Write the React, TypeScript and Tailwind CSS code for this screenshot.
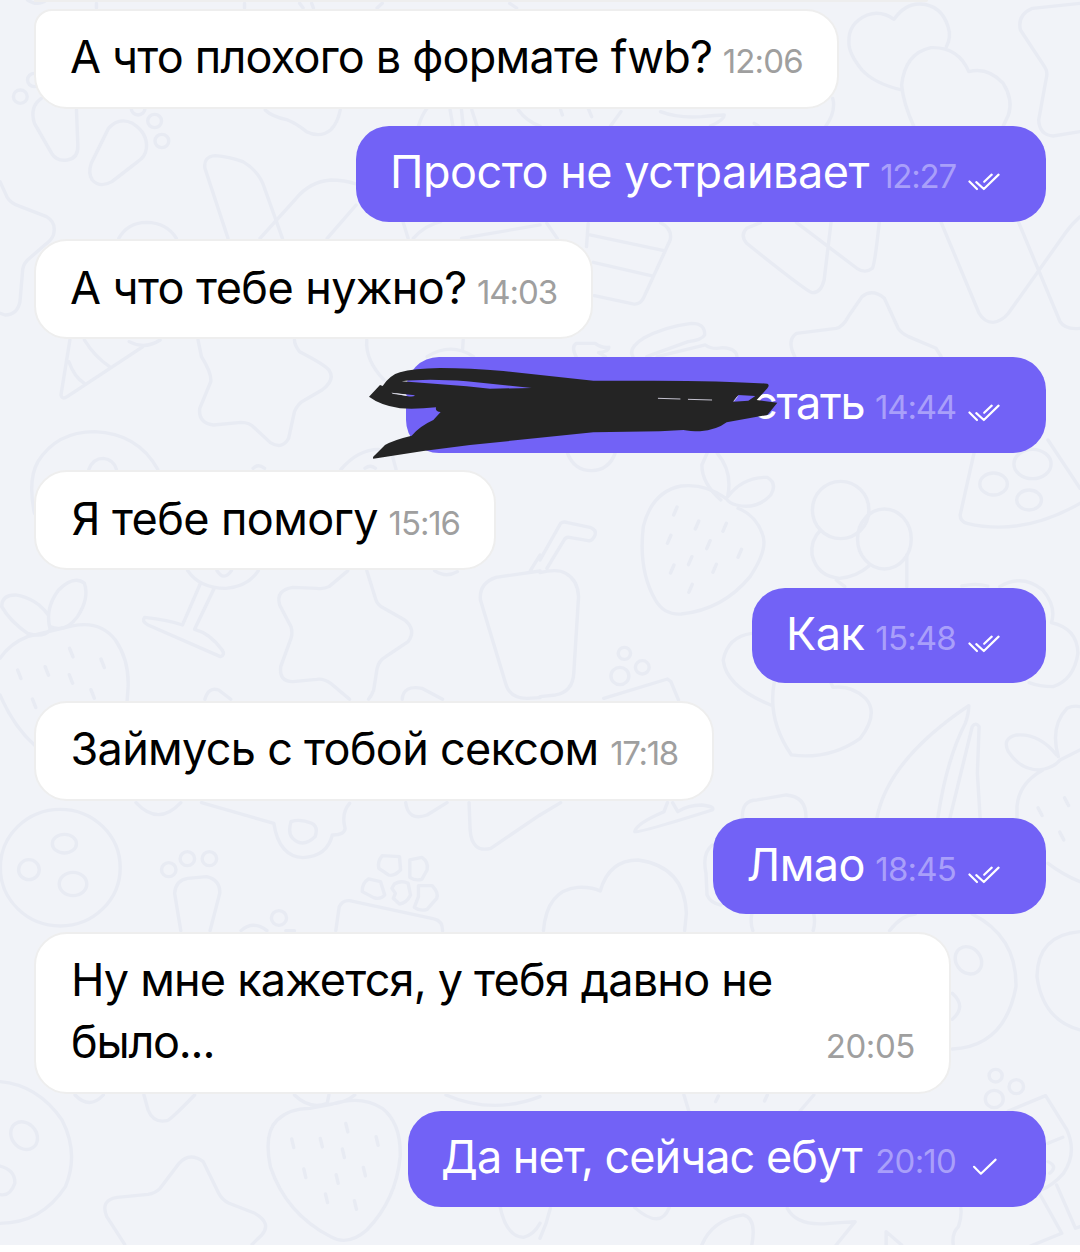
import type { ReactNode } from "react";

type Message = {
  lines: string[];
  time: string;
  mine?: boolean;
  status?: "sent" | "read";
  box: string;
  tracking: string;
  timeTracking?: string;
};

const messages: Message[] = [
  { lines: ["А что плохого в формате fwb?"], time: "12:06", box: "w-[805px] rounded-tl-[18px] pl-[34px]", tracking: "tracking-[-0.79px]" },
  { lines: ["Просто не устраивает"], time: "12:27", mine: true, status: "read", box: "w-[690px] pl-[34px]", tracking: "tracking-[-0.48px]", timeTracking: "tracking-[-1.2px]" },
  { lines: ["А что тебе нужно?"], time: "14:03", box: "w-[559px] pl-[34px]", tracking: "tracking-[-0.58px]", timeTracking: "tracking-[-1.1px]" },
  { lines: ["стать"], time: "14:44", mine: true, status: "read", box: "w-[640px] pl-[346px]", tracking: "tracking-[-1.3px]", timeTracking: "tracking-[-1.2px]" },
  { lines: ["Я тебе помогу"], time: "15:16", box: "w-[462px] pl-[35.5px]", tracking: "tracking-[-0.6px]", timeTracking: "tracking-[-1.1px]" },
  { lines: ["Как"], time: "15:48", mine: true, status: "read", box: "w-[294px] pl-[34px]", tracking: "tracking-[-0.5px]" },
  { lines: ["Займусь с тобой сексом"], time: "17:18", box: "w-[680px] pl-[34.5px]", tracking: "tracking-[-0.7px]", timeTracking: "tracking-[-1.3px]" },
  { lines: ["Лмао"], time: "18:45", mine: true, status: "read", box: "w-[333px] pl-[33.5px]", tracking: "tracking-[-0.5px]" },
  { lines: ["Ну мне кажется, у тебя давно не", "было..."], time: "20:05", box: "w-[917px] pl-[35px]", tracking: "tracking-[-0.8px]", timeTracking: "tracking-[-0.4px]" },
  { lines: ["Да нет, сейчас ебут"], time: "20:10", mine: true, status: "sent", box: "w-[638px] pl-[33px]", tracking: "tracking-[-0.98px]" },
];

function StatusIcon({ status }: { status: "sent" | "read" }) {
  return status === "read" ? (
    <svg className="ml-3 h-[19px] w-[33px] shrink-0 translate-y-[3px]" viewBox="684 160 100 58" fill="none" stroke="#fff" strokeWidth="6.5" strokeLinecap="round" strokeLinejoin="round">
      <path d="M688 189L711 212M709 191L732 212L777 168M733 190L756 168" />
    </svg>
  ) : (
    <svg className="ml-3 h-[19px] w-[33px] shrink-0 translate-y-[3px]" viewBox="144 172 100 58" fill="none" stroke="#fff" strokeWidth="6.5" strokeLinecap="round" strokeLinejoin="round">
      <path d="M162 202L183 223L228 180" />
    </svg>
  );
}

function Bubble({ m }: { m: Message }) {
  const base = "flex items-center rounded-[33px] pb-[3px]";
  const tone = m.mine
    ? "h-[95.75px] self-end bg-[#7262f6] pr-[45px] text-white"
    : "self-start border-2 border-[#eeeeee] bg-white pr-[34px] text-black";
  const height = m.mine ? "" : m.lines.length > 1 ? "h-[162px]" : "h-[100px]";
  return (
    <div className={`${base} ${tone} ${height} ${m.box}`}>
      <div className="flex w-full items-baseline-last justify-between whitespace-nowrap">
        <div className={`text-[45px] leading-[62px] ${m.tracking}`}>
          {m.lines.map((l, i) => (
            <div key={l} className={i > 0 ? "tracking-[-1.2px]" : ""}>{l}</div>
          ))}
        </div>
        <div className={`flex items-baseline text-[33px] ${m.mine ? "text-[#a99ffa]" : "text-[#9f9f9f]"}`}>
          <span className={m.timeTracking ?? "tracking-[-0.8px]"}>{m.time}</span>
          {m.status && <StatusIcon status={m.status} />}
        </div>
      </div>
    </div>
  );
}

function Piece({ x, y, children }: { x: number; y: number; children: ReactNode }) {
  return <g transform={`translate(${x} ${y}) scale(.3444 .3333)`}>{children}</g>;
}

function Rings({ items }: { items: number[][] }) {
  return (
    <>
      {items.map(([x, y, rx, ry, a]) => (
        <ellipse key={`${x}-${y}`} cx={x} cy={y} rx={rx} ry={ry ?? rx} transform={a ? `rotate(${a} ${x} ${y})` : undefined} />
      ))}
    </>
  );
}

function Seeds({ at, dx, dy }: { at: number[][]; dx: number; dy: number }) {
  return <path d={at.map(([x, y]) => `M${x - dx} ${y - dy}L${x + dx} ${y + dy}`).join("")} />;
}

/* Sweets-and-fruit line art behind the conversation */
function Wallpaper() {
  return (
    <svg className="absolute inset-0 h-[1245px] w-[1080px]" viewBox="0 0 1080 1245" fill="none" stroke="#e8ebf3" strokeWidth="10" strokeLinecap="round" strokeLinejoin="round">
      <Piece x={0} y={0}>
        <Rings items={[[59, 290, 20], [100, 240, 20], [401, 325, 20], [449, 363, 20], [470, 423, 20]]} />
        <path d="M120 295Q85 320 100 370L150 460Q165 485 195 480Q228 475 226 435L222 330" />
        <path d="M315 385Q345 350 385 370Q430 400 425 445Q422 470 400 485L325 545Q290 565 268 540Q255 520 265 490Z" />
        <path d="M80 0Q110 20 135 0M280 10V24M710 10V24M870 10L880 24M905 10L910 24M1110 10L1095 24M1480 10L1500 24" />
        <path d="M770 330Q790 350 835 360Q860 370 890 395Q930 415 960 390Q980 370 988 330" />
        <path d="M1215 378Q1225 345 1240 325M1307 330L1315 378M1340 330L1345 378M1370 330L1385 378M1505 330Q1530 365 1568 378" />
        <path d="M0 545L20 590Q30 610 60 620L135 650Q165 668 155 705Q150 720 130 735L80 780Q65 795 65 820L58 905Q50 945 15 945L0 940" />
        <path d="M345 715Q370 668 425 667Q485 668 512 715M662 715L595 505Q590 470 625 467Q665 470 705 485Q755 515 770 570L820 715" />
        <path d="M755 715L860 595Q900 545 960 540Q1000 540 1034 552M950 715L1034 615M1170 665L1185 715M1200 715Q1235 675 1280 665M1340 715L1568 675" />
      </Piece>

      <Piece x={540} y={0}>
        <path d="M1180 140Q1195 110 1185 80Q1165 15 1105 12Q1060 10 1028 58Q990 30 950 45Q895 70 897 125Q895 160 935 210Q970 250 1050 270" />
        <path d="M1085 378Q1055 310 1050 255Q1060 160 1135 143Q1215 140 1245 215Q1300 200 1345 250Q1375 300 1360 345L1345 378" />
        <path d="M1568 10L1430 25Q1385 45 1395 90L1465 200Q1475 215 1470 235L1448 360Q1450 405 1490 408L1568 395" />
        <path d="M350 335Q400 355 470 350Q510 345 535 345Q535 360 495 378M205 378L235 335M60 330L65 345M140 325L150 350M850 295Q860 335 830 378M622 370L634 378M20 670L50 715" />
        <path d="M140 670L135 740M145 705L360 752M155 787L325 828M158 887L270 912Q290 915 300 895L378 720Q385 685 350 668" />
        <path d="M845 668L825 840Q815 880 790 878Q775 875 600 730Q580 705 600 685L640 668M745 668L920 805Q945 822 965 805Q972 795 985 668" />
        <path d="M1165 668L1275 940Q1290 967 1315 967Q1340 965 1360 940L1525 700Q1545 670 1568 650M1390 668L1510 965Q1525 990 1568 985" />
        <path d="M740 1070Q715 1020 745 1000L860 985Q880 980 895 950L935 890Q965 865 1000 895L1040 985Q1050 1000 1070 1010L1150 1045L1165 1070" />
        <path d="M270 1070Q255 1045 300 1015Q360 980 440 970Q480 970 478 1005Q470 1020 430 1025L310 1070M340 1070L480 1035Q500 1050 530 1043Q570 1045 572 1070" />
        <path d="M105 1070Q90 1040 105 1030L160 1030Q180 1045 200 1042Q200 1055 170 1058L190 1070" />
      </Piece>

      <Piece x={0} y={340}>
        <path d="M203 0L177 165Q180 180 195 170L415 20M245 0Q275 50 318 80M200 65Q215 110 245 130M375 5Q420 30 465 0" />
        <path d="M575 0L585 50Q615 100 612 125L580 205Q575 250 620 255L700 247Q725 247 740 265L785 308Q820 330 838 295L855 215Q865 190 885 180L935 150Q975 120 955 90Q945 75 870 35Q855 15 855 0" />
        <path d="M1065 0Q1060 60 1115 120M1345 0L1343 30M1240 50Q1310 5 1375 50" />
        <path d="M100 520Q80 420 110 365Q165 275 275 275Q400 280 458 388M258 388Q270 355 300 355Q330 358 338 388M735 385Q750 370 768 385M990 388Q1040 328 1100 328M1060 385Q1075 373 1090 385M1140 350L1150 388" />
        <path d="M545 692Q580 745 655 745Q720 740 750 692M630 692Q650 725 672 692M1262 692Q1295 715 1328 695" />
        <path d="M582 730L530 855Q490 840 420 832Q410 845 430 855L640 950Q655 945 645 930Q610 880 565 868L622 745" />
        <path d="M145 865Q130 805 170 750Q215 705 245 730Q260 775 225 830Q190 880 145 860M145 870Q125 895 80 880Q30 845 5 800Q5 765 45 765Q105 775 140 825" />
        <path d="M0 955Q30 910 80 890L210 858Q290 840 335 900Q375 960 372 1040L368 1100M0 1065Q40 1160 100 1215" />
        <Seeds dx={5} dy={13} at={[[207, 938], [298, 970], [56, 1003], [136, 993], [206, 1017], [269, 1062], [99, 1090]]} />
        <path d="M1010 692L955 740Q940 748 920 745L850 742Q800 750 812 795L845 860Q850 880 845 895L815 980Q810 1025 850 1025L920 1018Q940 1015 960 1030L1015 1078M1065 692L1090 775Q1095 795 1115 805L1175 840Q1210 870 1185 905L1120 950Q1100 962 1095 985L1085 1050Q1080 1065 1070 1078" />
        <path d="M595 1078Q605 1040 635 1050L670 1078M1168 1078Q1170 1035 1225 1045L1285 1078" />
        <path d="M1568 693L1440 712Q1390 730 1395 780L1468 1030Q1480 1075 1530 1075L1568 1073M1540 692L1568 645" />
      </Piece>

      <Piece x={540} y={440}>
        <path d="M80 40Q100 92 150 92Q200 90 218 40" />
        <path d="M540 175Q480 130 410 138Q325 155 300 260Q285 390 335 480Q360 525 410 522Q530 510 610 410Q665 325 645 280Q625 225 575 205" />
        <path d="M525 180Q470 130 470 75L485 40M515 40Q560 95 545 170M545 170Q590 110 660 112Q690 130 670 165Q630 210 570 195Q550 190 540 175" />
        <Seeds dx={-5} dy={12} at={[[393, 213], [456, 255], [536, 262], [375, 298], [489, 314], [580, 340], [436, 362], [384, 387], [507, 385], [437, 445]]} />
        <path d="M0 360L60 250Q68 243 80 248L145 262Q165 270 160 285Q152 305 140 302L85 292Q75 290 70 300L20 385M0 398Q50 385 75 400Q110 420 112 470L98 700Q95 755 45 765L0 770" />
        <Rings items={[[873, 210, 82, 86], [1000, 297, 78, 90], [1317, 132, 40, 33], [1430, 72, 54, 44], [1420, 180, 36, 30], [245, 640, 18], [297, 682, 20], [232, 708, 26]]} />
        <path d="M815 270Q785 300 790 345Q805 410 870 415Q920 410 955 378M860 420L885 440M1065 345V440" />
        <path d="M1260 40L1220 225Q1220 245 1240 250Q1400 290 1568 190M1475 0L1568 145" />
        <path d="M1225 438Q1265 428 1300 438M1335 440Q1400 400 1460 450Q1500 500 1485 548Q1560 565 1562 640Q1550 720 1490 740Q1450 740 1420 728" />
        <path d="M615 580Q545 590 532 660Q540 740 670 795M680 728Q660 840 730 945Q840 960 930 895Q985 820 945 775Q905 735 850 742L845 728" />
        <path d="M185 775L370 717L380 725L402 780M588 1135Q585 1080 630 1080L715 1065Q775 1070 772 1135" />
        <path d="M978 1135Q1010 960 1245 797Q1245 820 1235 850Q1180 960 1155 1135M1190 1135L1255 860Q1265 845 1275 860L1270 1000L1278 1135" />
        <path d="M1505 950Q1480 860 1530 805Q1550 795 1568 800M1500 945Q1450 880 1385 885Q1340 895 1360 935Q1395 990 1450 990Q1490 985 1510 960L1568 930M1460 990Q1390 1030 1385 1100V1150" />
        <Seeds dx={6} dy={12} at={[[1452, 1115], [1529, 1085], [1515, 1188]]} />
      </Piece>

      <Piece x={0} y={680}>
        <Rings items={[[175, 563, 174, 175], [187, 491, 35, 28], [84, 569, 30], [212, 612, 40, 35], [490, 569, 21], [544, 536, 21], [608, 536, 21], [810, 714, 22]]} />
        <path d="M395 368Q460 440 525 368M585 368L795 430Q810 530 880 533Q950 530 965 465Q1000 465 1002 445Q990 400 1015 370M845 425Q835 460 850 475Q880 505 915 470Q925 440 905 430Q870 415 845 425" />
        <path d="M525 752L507 640Q510 600 545 595L600 590Q640 600 638 640L610 752M700 752Q735 720 775 752M830 752H855" />
        <path d="M1178 368Q1185 425 1240 405L1298 368M1362 368L1365 450Q1370 520 1425 505L1568 405" />
        <path d="M975 752L985 680Q995 660 1015 662L1260 717Q1285 722 1285 752" />
        <path d="M1110 527L1160 530L1163 570Q1145 590 1128 585L1100 565Q1095 545 1110 527ZM1190 540L1225 532Q1245 545 1240 570L1225 598Q1205 603 1190 592ZM1070 597L1105 605L1117 645Q1105 660 1085 653L1052 635Q1050 610 1070 597ZM1145 612Q1165 600 1185 610L1192 645Q1180 670 1160 672L1142 655L1148 640L1138 625ZM1215 617H1255Q1275 640 1268 655L1240 688Q1220 695 1203 682L1215 650Z" />
      </Piece>

      <Piece x={540} y={780}>
        <path d="M0 105L60 68M370 68L360 95Q280 130 275 155Q285 160 500 90Q510 80 470 75Q430 75 400 95L385 68" />
        <path d="M10 452Q20 330 110 322Q150 320 175 333Q200 240 285 240Q420 260 425 400L420 452M500 195Q470 220 482 280L485 345Q495 370 525 375M615 402Q610 430 618 452M795 402Q800 430 793 452" />
        <path d="M1015 452Q1050 405 1090 402M1255 402Q1385 470 1382 620Q1350 800 1197 807M1197 640Q1240 680 1197 718M1568 455Q1445 465 1443 590Q1460 720 1568 750M1475 250Q1520 285 1568 305" />
        <Rings items={[[1244, 541, 36, 43, -35], [1323, 887, 19], [1383, 920, 21], [1319, 957, 26]]} />
        <path d="M418 945L432 993M518 948L510 965M660 945L652 963M795 945L755 993" />
        <path d="M1360 993L1468 947L1530 1050Q1560 1120 1520 1180Q1490 1215 1455 1230M1475 1090L1518 1072M1475 1145Q1505 1160 1480 1180M1500 1215L1555 1345L1568 1340M1450 1240L1515 1360L1420 1400" />
        <path d="M0 1375Q20 1330 30 1285M275 1283Q350 1350 375 1283M470 1395Q500 1320 590 1305Q630 1315 615 1395M718 1285Q745 1340 840 1330L915 1325L860 1395M1005 1395V1355L1050 1395M1222 1285Q1225 1310 1215 1340Q1195 1360 1200 1395" />
      </Piece>

      <Piece x={0} y={1060}>
        <path d="M0 65Q110 75 180 180Q230 280 190 380Q120 490 0 490M0 318Q45 330 43 370Q30 410 0 404M218 105Q260 150 300 105M418 105L430 150Q445 190 485 182Q495 180 565 105" />
        <Rings items={[[70, 227, 36, 44, -35]]} />
        <path d="M362 553L310 470Q290 420 340 412L430 403Q450 400 465 385L520 310Q550 275 590 305L635 400Q645 420 665 430L740 460Q790 490 760 525L732 553" />
        <path d="M965 132Q1050 105 1110 145Q1165 190 1162 290Q1150 420 1065 510Q1010 560 960 530Q830 460 785 320Q765 220 805 180Q840 145 900 145ZM855 105Q900 150 950 130L955 105M975 130Q1005 125 1030 105" />
        <Seeds dx={3} dy={13} at={[[1007, 203], [850, 250], [933, 248], [997, 280], [1095, 243], [885, 340], [979, 357], [1058, 335], [948, 415], [1032, 435]]} />
        <path d="M1295 105Q1430 165 1568 110M1452 440Q1470 530 1520 532Q1550 525 1568 490" />
      </Piece>
    </svg>
  );
}

/* Marker strokes hiding the start of a message */
function Scribble() {
  return (
    <svg className="absolute left-[360px] top-[340px] h-[130px] w-[440px]" viewBox="0 0 1320 390">
      <path
        fill="#242424"
        fillRule="evenodd"
        d="M27 170L60 135L68 138Q90 105 120 97Q160 85 240 84Q330 84 430 93L700 122L880 122Q1100 123 1222 131Q1230 135 1222 145L1190 180L1252 188L1222 225L1100 247Q1070 270 1020 274Q990 274 970 270L900 274L700 277L330 315L190 333L40 356Q36 352 45 345L75 315Q100 300 155 287Q180 258 220 240L242 216Q225 215 228 202Q170 208 120 205Q60 195 27 170ZM125 124Q200 115 320 124L515 144L390 146L320 139ZM92 158L165 166Q160 172 140 168ZM1120 185L1135 165L1186 168L1165 182Z"
      />
      <path d="M98 160L140 166M895 175L960 177M985 178L1055 180M1122 183L1132 170" stroke="#e4e2f2" strokeWidth="2.5" fill="none" strokeLinecap="round" />
    </svg>
  );
}

export default function App() {
  return (
    <div className="h-[1252px] w-[1080px] overflow-hidden bg-white font-['Inter',sans-serif]">
      <div className="relative h-[1245px] overflow-hidden bg-[#f1f3f8]">
        <Wallpaper />
        <div className="relative flex flex-col pl-[34px] pr-[34px]">
          <div className="h-[2px] w-[894px] rounded-br-[2px] bg-[#eeeeee]" />
          <div className="mt-[6.5px] flex flex-col gap-[17.5px]">
            {messages.map((m) => (
              <Bubble key={m.time} m={m} />
            ))}
          </div>
        </div>
        <Scribble />
      </div>
    </div>
  );
}
